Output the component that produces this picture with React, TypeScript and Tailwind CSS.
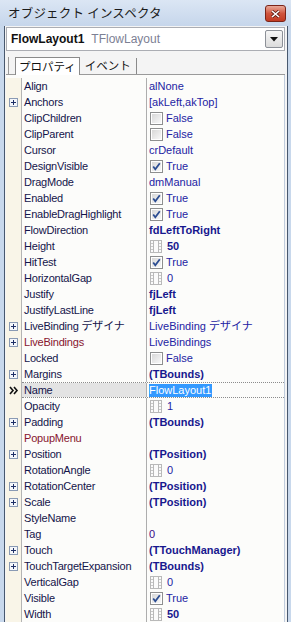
import React from 'react';

type Kind = 'text' | 'bold' | 'check' | 'spin' | 'spinb' | 'sel' | 'none' | 'tag';
type Row = { name: string; exp?: boolean; maroon?: boolean; kind: Kind; value?: string; checked?: boolean };

const rows: Row[] = [
  { name: 'Align', kind: 'text', value: 'alNone' },
  { name: 'Anchors', exp: true, kind: 'text', value: '[akLeft,akTop]' },
  { name: 'ClipChildren', kind: 'check', value: 'False' },
  { name: 'ClipParent', kind: 'check', value: 'False' },
  { name: 'Cursor', kind: 'text', value: 'crDefault' },
  { name: 'DesignVisible', kind: 'check', checked: true, value: 'True' },
  { name: 'DragMode', kind: 'text', value: 'dmManual' },
  { name: 'Enabled', kind: 'check', checked: true, value: 'True' },
  { name: 'EnableDragHighlight', kind: 'check', checked: true, value: 'True' },
  { name: 'FlowDirection', kind: 'bold', value: 'fdLeftToRight' },
  { name: 'Height', kind: 'spinb', value: '50' },
  { name: 'HitTest', kind: 'check', checked: true, value: 'True' },
  { name: 'HorizontalGap', kind: 'spin', value: '0' },
  { name: 'Justify', kind: 'bold', value: 'fjLeft' },
  { name: 'JustifyLastLine', kind: 'bold', value: 'fjLeft' },
  { name: 'LiveBinding デザイナ', exp: true, kind: 'text', value: 'LiveBinding デザイナ' },
  { name: 'LiveBindings', exp: true, maroon: true, kind: 'text', value: 'LiveBindings' },
  { name: 'Locked', kind: 'check', value: 'False' },
  { name: 'Margins', exp: true, kind: 'bold', value: '(TBounds)' },
  { name: 'Name', kind: 'sel', value: 'FlowLayout1' },
  { name: 'Opacity', kind: 'spin', value: '1' },
  { name: 'Padding', exp: true, kind: 'bold', value: '(TBounds)' },
  { name: 'PopupMenu', maroon: true, kind: 'none' },
  { name: 'Position', exp: true, kind: 'bold', value: '(TPosition)' },
  { name: 'RotationAngle', kind: 'spin', value: '0' },
  { name: 'RotationCenter', exp: true, kind: 'bold', value: '(TPosition)' },
  { name: 'Scale', exp: true, kind: 'bold', value: '(TPosition)' },
  { name: 'StyleName', kind: 'none' },
  { name: 'Tag', kind: 'tag', value: '0' },
  { name: 'Touch', exp: true, kind: 'bold', value: '(TTouchManager)' },
  { name: 'TouchTargetExpansion', exp: true, kind: 'bold', value: '(TBounds)' },
  { name: 'VerticalGap', kind: 'spin', value: '0' },
  { name: 'Visible', kind: 'check', checked: true, value: 'True' },
  { name: 'Width', kind: 'spinb', value: '50' },
];

const FONT = { fontFamily: '"Liberation Sans", "Noto Sans CJK JP", sans-serif' };
const CJK = { fontFamily: '"Noto Sans CJK JP", "Liberation Sans", sans-serif' };

function PlusBox() {
  return (
    <svg width="9" height="9" viewBox="0 0 9 9" className="block">
      <rect x="0.5" y="0.5" width="8" height="8" fill="#f4f6fa" stroke="#8a9ab4" />
      <path d="M2 4.5H7M4.5 2V7" stroke="#1e2f66" strokeWidth="1" />
    </svg>
  );
}

function CheckBox({ checked }: { checked?: boolean }) {
  return (
    <svg width="13" height="13" viewBox="0 0 13 13" className="block shrink-0">
      <defs>
        <linearGradient id="cbg" x1="0" y1="0" x2="1" y2="1">
          <stop offset="0" stopColor="#d8d8d8" />
          <stop offset="1" stopColor="#f8f8f8" />
        </linearGradient>
      </defs>
      <rect x="0.5" y="0.5" width="12" height="12" fill="#fff" stroke="#8e8f8f" />
      <rect x="2" y="2" width="9" height="9" fill="url(#cbg)" />
      {checked && <path d="M3.2 6.5L5.3 9.2L9.8 3.2" fill="none" stroke="#2c4d92" strokeWidth="1.8" />}
    </svg>
  );
}

function Spin() {
  return (
    <svg width="12" height="13" viewBox="0 0 12 13" className="block shrink-0">
      <rect x="0.5" y="0.5" width="11" height="12" fill="#fbfbfb" stroke="#b9b9b9" />
      <path d="M3.5 0.5V12.5M8.5 0.5V12.5" stroke="#b9b9b9" />
      <path d="M1 3.5H3M1 6.5H3M1 9.5H3M9 3.5H11M9 6.5H11M9 9.5H11" stroke="#c9c9c9" />
    </svg>
  );
}

function Value({ r }: { r: Row }) {
  switch (r.kind) {
    case 'text':
      return <span className="pl-[2px] text-[#2323a3] whitespace-nowrap">{r.value}</span>;
    case 'tag':
      return <span className="pl-[2px] text-[#3a0a86]">{r.value}</span>;
    case 'bold':
      return <span className="pl-[2px] font-bold text-[#17178e] whitespace-nowrap">{r.value}</span>;
    case 'check':
      return (
        <div className="flex items-center pl-[3px] gap-[2px]">
          <CheckBox checked={r.checked} />
          <span className="text-[#2323a3] pl-[1px]">{r.value}</span>
        </div>
      );
    case 'spin':
    case 'spinb':
      return (
        <div className="flex items-center pl-[3px] gap-[4px]">
          <Spin />
          <span className={r.kind === 'spinb' ? 'font-bold text-[#17178e] pl-[1px]' : 'text-[#2323a3] pl-[1px]'}>{r.value}</span>
        </div>
      );
    case 'sel':
      return (
        <div className="flex items-center pl-[2px]">
          <span className="bg-[#3399ff] text-white leading-[13px] h-[13px] pr-[1px]">{r.value}</span>
        </div>
      );
    default:
      return null;
  }
}

function GridRow({ r }: { r: Row }) {
  const sel = r.kind === 'sel';
  return (
    <div className="flex h-[16px] leading-[16px]">
      <div className="w-[16px] shrink-0 bg-[#f9f5e8] border-r border-[#b4b4b4] flex items-center justify-center">
        {r.exp && <PlusBox />}
        {sel && (
          <svg width="10" height="9" viewBox="0 0 10 9" className="block">
            <path d="M1 1L4 4.5L1 8M5 1L8 4.5L5 8" fill="none" stroke="#111" strokeWidth="1.6" />
          </svg>
        )}
      </div>
      <div
        className={
          'flex flex-1 min-w-0 ' +
          (sel ? 'border-y border-dotted border-[#8c8c8c]' : '')
        }
      >
        <div
          className={
            'w-[125px] shrink-0 border-r border-[#adadad] pl-[2px] tracking-[-0.2px] whitespace-nowrap overflow-hidden flex items-center ' +
            (sel ? 'bg-[#e3e3e3] ' : '') +
            (r.maroon ? 'text-[#87152e]' : 'text-[#14144a]')
          }
        >
          {r.name}
        </div>
        <div className="flex-1 min-w-0 flex items-center overflow-hidden">
          <Value r={r} />
        </div>
      </div>
    </div>
  );
}

export default function App() {
  return (
    <div className="w-[291px] h-[622px] overflow-hidden bg-[#c8d8ec] flex flex-col text-[11px]" style={FONT}>
      <div className="h-[26px] shrink-0 flex items-center justify-between pl-[8px] pr-[5px] bg-gradient-to-b from-[#dbe6f4] to-[#c6d6eb]">
        <span className="text-[12.5px] text-[#1b1b1b] tracking-[0.2px]" style={CJK}>
          オブジェクト インスペクタ
        </span>
        <div className="w-[21px] h-[17px] mt-[1px] rounded-[3px] border border-[#7a2418] bg-gradient-to-b from-[#e8a898] via-[#d0553e] to-[#c23b22] flex items-center justify-center">
          <svg width="9" height="8" viewBox="0 0 9 8" className="block">
            <path d="M1 1L8 7M8 1L1 7" stroke="#5a1a10" strokeWidth="3" />
            <path d="M1 1L8 7M8 1L1 7" stroke="#fff" strokeWidth="1.6" />
          </svg>
        </div>
      </div>
      <div className="flex-1 min-h-0 flex flex-col ml-[4px] mr-[3px] border-l border-r border-[#48586e] bg-[#f4f4f4] pl-[1px] pr-[2px]">
        <div className="h-[24px] mt-[1px] shrink-0 bg-white border border-[#abadb3] flex items-center justify-between pl-[4px] pr-[1px]">
          <div className="flex items-center gap-[7px] whitespace-nowrap">
            <span className="font-bold text-[#111] text-[12px]">FlowLayout1</span>
            <span className="text-[#7c8094] text-[12px]">TFlowLayout</span>
          </div>
          <div className="w-[18px] h-[18px] rounded-[2px] border border-[#8d9198] bg-gradient-to-b from-[#f6f6f6] to-[#dcdcdc] flex items-center justify-center">
            <svg width="8" height="5" viewBox="0 0 8 5" className="block">
              <path d="M0 0H8L4 4.5Z" fill="#111" />
            </svg>
          </div>
        </div>
        <div className="h-[24px] shrink-0 flex items-end pl-[2px] border-b border-[#9a9a9a]">
          <div className="h-[17px] w-[7px] border-l border-[#9a9a9a]" />
          <div className="h-[18px] px-[3px] border-l border-t border-r border-[#8a8a8a] bg-white flex items-center text-[11.5px] text-[#111] -mb-[1px]" style={CJK}>
            プロパティ
          </div>
          <div className="h-[16px] px-[5px] border-r border-[#8a8a8a] flex items-center text-[11.5px] text-[#111]" style={CJK}>
            イベント
          </div>
        </div>
        <div className="flex-1 min-h-0 bg-[#fcfcfa] pt-[3px] border-r border-[#c0ccdc]">
          {rows.map((r) => (
            <GridRow key={r.name} r={r} />
          ))}
        </div>
      </div>
    </div>
  );
}
